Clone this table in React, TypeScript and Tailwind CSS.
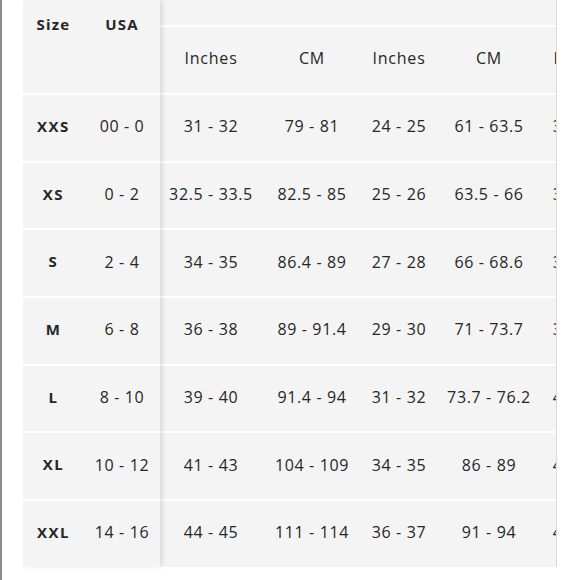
const rows = [
  { size: "XXS", usa: "00 - 0", cells: ["31 - 32", "79 - 81", "24 - 25", "61 - 63.5", "33 - 34"] },
  { size: "XS", usa: "0 - 2", cells: ["32.5 - 33.5", "82.5 - 85", "25 - 26", "63.5 - 66", "35 - 36"] },
  { size: "S", usa: "2 - 4", cells: ["34 - 35", "86.4 - 89", "27 - 28", "66 - 68.6", "36 - 37"] },
  { size: "M", usa: "6 - 8", cells: ["36 - 38", "89 - 91.4", "29 - 30", "71 - 73.7", "38 - 40"] },
  { size: "L", usa: "8 - 10", cells: ["39 - 40", "91.4 - 94", "31 - 32", "73.7 - 76.2", "41 - 42"] },
  { size: "XL", usa: "10 - 12", cells: ["41 - 43", "104 - 109", "34 - 35", "86 - 89", "43 - 45"] },
  { size: "XXL", usa: "14 - 16", cells: ["44 - 45", "111 - 114", "36 - 37", "91 - 94", "46 - 47"] },
];

const units = ["Inches", "CM", "Inches", "CM", "Inches"];
const widths = ["w-[102px]", "w-[100px]", "w-[74px]", "w-[106px]", "w-[76px]"];

export default function App() {
  return (
    <div
      className="w-[580px] h-[580px] bg-white flex text-[#262626] overflow-hidden"
      style={{ fontFamily: '"Open Sans", "Liberation Sans", sans-serif' }}
    >
      <div className="w-[2px] h-full bg-[#8c8c8c] shrink-0" />

      <div className="ml-[21px] flex items-start">
        {/* fixed columns */}
        <div className="relative z-10 w-[137px] shrink-0 bg-[#f4f4f4] shadow-[3px_0_5px_-1px_rgba(0,0,0,0.13)]">
          <div className="h-[93px] flex pt-[13px] font-bold text-[15px] tracking-[0.08em]">
            <div className="w-[61px] text-center">Size</div>
            <div className="w-[76px] text-center">USA</div>
          </div>
          {rows.map((r) => (
            <div key={r.size} className="h-[67.67px] border-t-2 border-white flex items-center pb-[3px]">
              <div className="w-[61px] text-center font-bold text-[15px] tracking-[0.1em]">{r.size}</div>
              <div className="w-[76px] text-center text-[16px] tracking-[0.04em]">{r.usa}</div>
            </div>
          ))}
        </div>

        {/* scrolling columns */}
        <div className="w-[397px] overflow-hidden bg-[#f4f4f4] border-r border-[#d9d9d9]">
          <div className="w-[600px]">
            <div className="h-[25px]" />
            <div className="h-[68px] border-t-2 border-white flex items-center pb-[5px] text-[16px] tracking-[0.05em]">
              {units.map((u, i) => (
                <div key={i} className={`${widths[i]} shrink-0 text-center`}>
                  {u}
                </div>
              ))}
            </div>
            {rows.map((r) => (
              <div key={r.size} className="h-[67.67px] border-t-2 border-white flex items-center pb-[3px] text-[16px] tracking-[0.04em]">
                {r.cells.map((c, i) => (
                  <div key={i} className={`${widths[i]} shrink-0 text-center whitespace-nowrap`}>
                    {c}
                  </div>
                ))}
              </div>
            ))}
          </div>
        </div>
      </div>
    </div>
  );
}
